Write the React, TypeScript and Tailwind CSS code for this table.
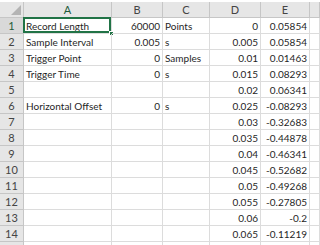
const cols = ["A", "B", "C", "D", "E", ""];

type Row = [string, string, string, string, string];

const rows: Row[] = [
  ["Record Length", "60000", "Points", "0", "0.05854"],
  ["Sample Interval", "0.005", "s", "0.005", "0.05854"],
  ["Trigger Point", "0", "Samples", "0.01", "0.01463"],
  ["Trigger Time", "0", "s", "0.015", "0.08293"],
  ["", "", "", "0.02", "0.06341"],
  ["Horizontal Offset", "0", "s", "0.025", "-0.08293"],
  ["", "", "", "0.03", "-0.32683"],
  ["", "", "", "0.035", "-0.44878"],
  ["", "", "", "0.04", "-0.46341"],
  ["", "", "", "0.045", "-0.52682"],
  ["", "", "", "0.05", "-0.49268"],
  ["", "", "", "0.055", "-0.27805"],
  ["", "", "", "0.06", "-0.2"],
  ["", "", "", "0.065", "-0.11219"],
  ["", "", "", "", ""],
];

// right-aligned columns are numeric
const numeric = [false, true, false, true, true, false];

export default function App() {
  return (
    <div
      className="w-[320px] h-[245px] overflow-hidden bg-white text-[#1f1f1f] text-[10px]"
      style={{ fontFamily: 'Lato, "Liberation Sans", sans-serif' }}
    >
      <div className="h-[2px] bg-white" />
      <div className="grid grid-cols-[24px_88px_51px_47px_51px_49px_1fr] auto-rows-[16px]">
        {/* corner */}
        <div className="relative bg-[#e6e6e6] border-r border-b border-[#c6c6c6]">
          <svg className="absolute right-[2px] bottom-[2px]" width="10" height="10" viewBox="0 0 10 10">
            <path d="M10 0 L10 10 L0 10 Z" fill="#b4b4b4" />
          </svg>
        </div>
        {cols.map((c, i) => (
          <div
            key={i}
            className={`flex items-center justify-center bg-[#e6e6e6] border-r border-b border-[#c6c6c6] leading-none text-[11px] ${
              i === 0 ? "text-[#1e5c3a] bg-[#d9d9d9]" : "text-[#444]"
            }`}
          >
            {c}
          </div>
        ))}
        {rows.map((r, ri) => (
          <RowCells key={ri} n={ri + 1} cells={r} />
        ))}
      </div>
    </div>
  );
}

function RowCells({ n, cells }: { n: number; cells: Row }) {
  return (
    <>
      <div
        className={`flex items-center justify-center border-r border-b border-[#c6c6c6] leading-none text-[11px] ${
          n === 1 ? "bg-[#d9d9d9] text-[#1e5c3a]" : "bg-[#e6e6e6] text-[#444]"
        }`}
      >
        {n < 15 ? n : ""}
      </div>
      {[...cells, ""].map((v, ci) => {
        const selected = n === 1 && ci === 0;
        return (
          <div
            key={ci}
            className={`relative flex items-center whitespace-nowrap leading-none px-[2px] border-r border-b border-[#dcdcdc] ${
              numeric[ci] ? "justify-end" : "justify-start"
            } ${ci === 0 && v ? "overflow-visible" : "overflow-hidden"}`}
          >
            {v}
            {selected && (
              <>
                <div className="absolute -left-[1px] -top-[1px] right-0 bottom-0 border-2 border-[#217346] pointer-events-none" />
                <div className="absolute -right-[3px] -bottom-[3px] w-[5px] h-[5px] bg-[#217346] border border-white" />
              </>
            )}
          </div>
        );
      })}
    </>
  );
}
